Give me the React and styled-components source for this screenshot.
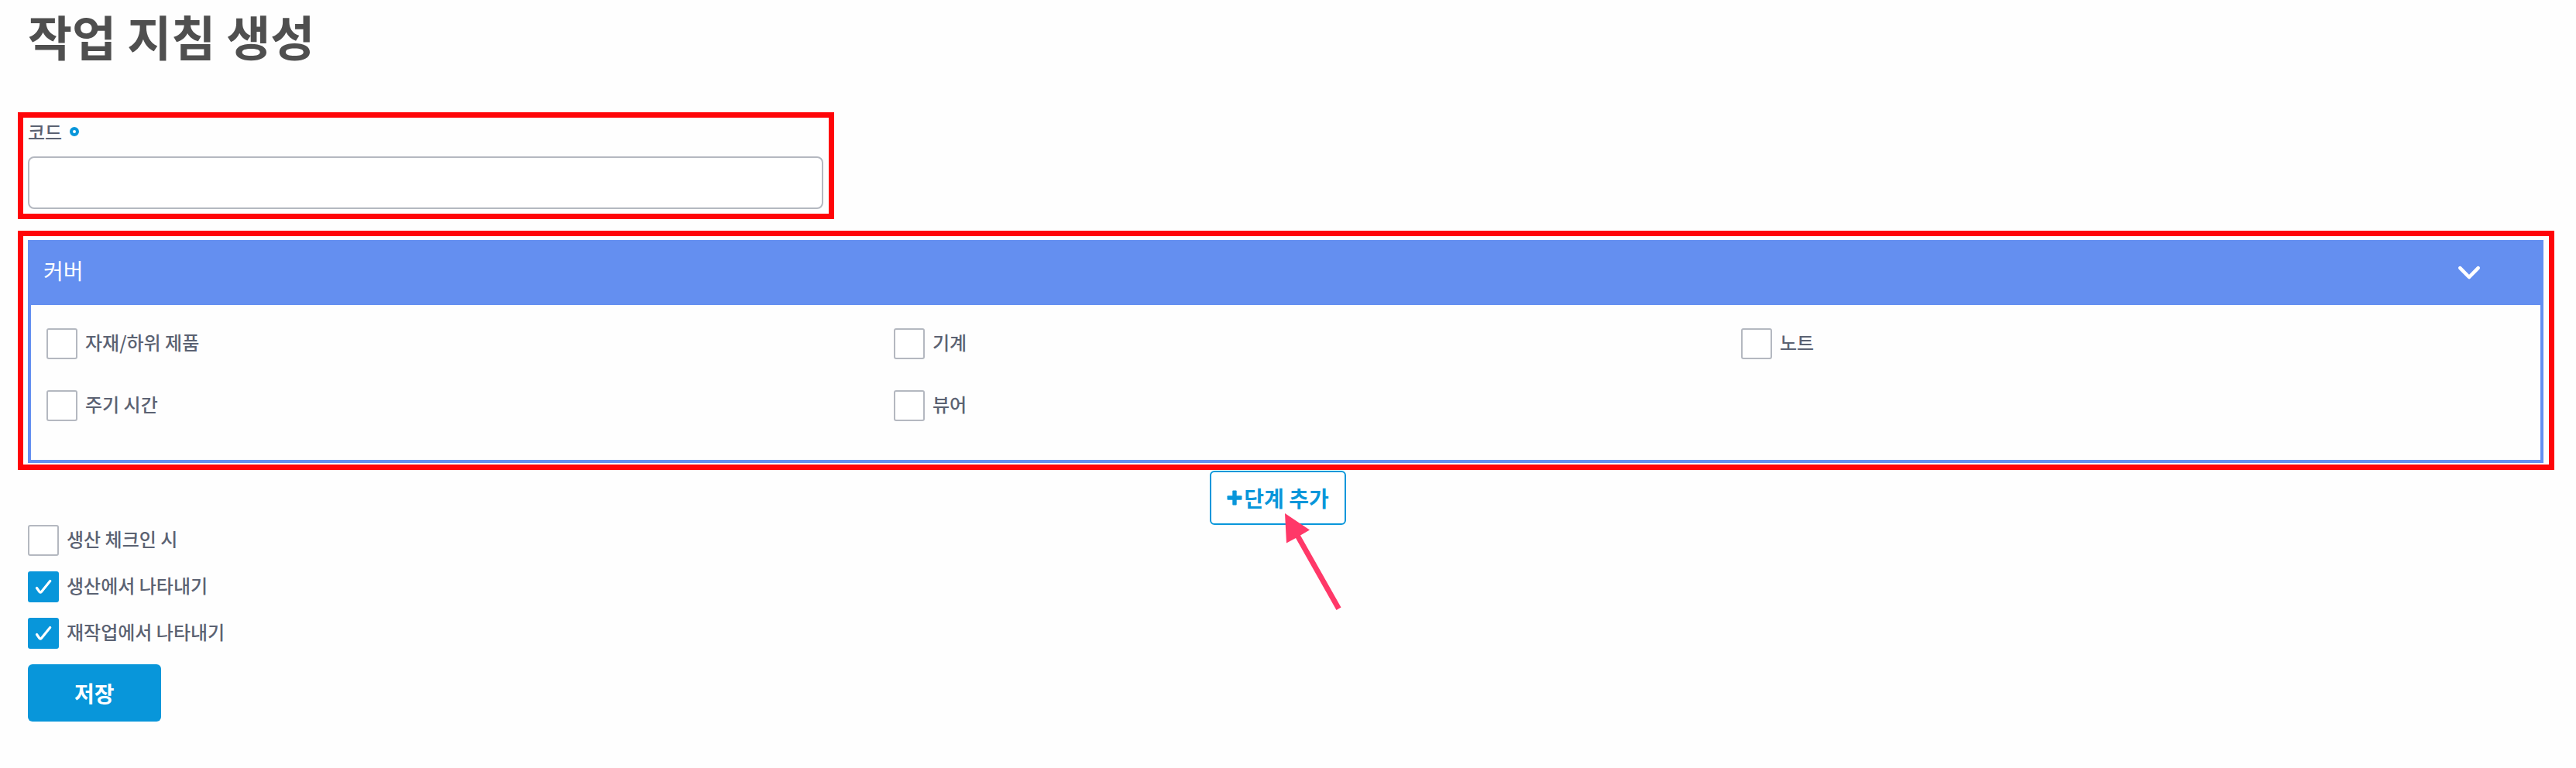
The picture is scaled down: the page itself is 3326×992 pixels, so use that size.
import React, { useState } from "react";
import styled, { createGlobalStyle } from "styled-components";

const GlobalStyle = createGlobalStyle`
  *, *::before, *::after { box-sizing: border-box; }
  body {
    margin: 0;
    background: #fefefe;
    color: #5b6272;
    font-family: "Noto Sans CJK KR", "Noto Sans", sans-serif;
    font-size: 24px;
    line-height: 36px;
    font-weight: 500;
  }
  button, input { font: inherit; }
`;

const Page = styled.main`
  padding: 6px 28px 60px 23px;
`;

const Title = styled.h1`
  margin: 0 0 59px;
  padding-left: 13px;
  color: #4f4f4f;
  font-size: 62px;
  line-height: 80px;
  font-weight: 700;
`;

const FieldGrid = styled.div`
  display: grid;
  grid-template-columns: repeat(3, 1fr);
  gap: 56px;
  margin-bottom: 15px;
`;

const Highlight = styled.div`
  border: 7px solid #ff0408;
  padding: ${(p) => p.$padding};
`;

const FieldLabel = styled.label`
  display: flex;
  align-items: center;
  gap: 10px;
  margin-bottom: 14px;
`;

const RequiredMark = styled.span`
  width: 12px;
  height: 12px;
  border: 4px solid #0896da;
  border-radius: 50%;
`;

const TextInput = styled.input`
  display: block;
  width: 100%;
  height: 68px;
  padding: 0 16px;
  border: 2px solid #b4b8c0;
  border-radius: 8px;
  background: #fff;
  color: inherit;
`;

const Panel = styled.section`
  border: 4px solid #648ff0;
`;

const PanelHeader = styled.button`
  display: flex;
  align-items: center;
  justify-content: space-between;
  width: 100%;
  height: 80px;
  padding: 0 72px 10px 16px;
  border: 0;
  background: #648ff0;
  color: #fff;
  font-size: 28px;
  font-weight: 400;
  cursor: pointer;
`;

const PanelBody = styled.div`
  display: grid;
  grid-template-columns: repeat(3, 1fr);
  gap: 40px 82px;
  padding: 30px 20px 50px;
`;

const CheckLabel = styled.label`
  display: flex;
  align-items: center;
  gap: 10px;
  height: 40px;
  cursor: pointer;
`;

const CheckText = styled.span`
  padding-bottom: 4px;
`;

const CheckBox = styled.span`
  display: grid;
  width: 40px;
  height: 40px;

  & > * { grid-area: 1 / 1; }
  & > svg { pointer-events: none; }
`;

const CheckInput = styled.input`
  appearance: none;
  width: 40px;
  height: 40px;
  margin: 0;
  border: 2px solid #b4b8c0;
  border-radius: 3px;
  background: #fff;

  &:checked {
    border-color: #0896da;
    background: #0896da;
  }
`;

const AddRow = styled.div`
  display: flex;
  justify-content: center;
  padding: 1px 21px 0 0;
`;

const AddAnchor = styled.div`
  position: relative;
`;

const AddButton = styled.button`
  display: flex;
  align-items: center;
  gap: 2px;
  height: 70px;
  padding: 0 20px;
  border: 2px solid #0896da;
  border-radius: 6px;
  background: #fff;
  color: #0896da;
  font-size: 28px;
  font-weight: 700;
  cursor: pointer;
`;

const Pointer = styled.svg`
  position: absolute;
  left: 96px;
  top: 54px;
  pointer-events: none;
`;

const Options = styled.div`
  display: flex;
  flex-direction: column;
  align-items: flex-start;
  gap: 20px;
  padding-left: 13px;
`;

const SaveButton = styled.button`
  height: 74px;
  padding: 0 60px;
  border: 0;
  border-radius: 6px;
  background: #0896da;
  color: #fff;
  font-size: 28px;
  font-weight: 700;
  cursor: pointer;
`;

function Check({ label, defaultChecked = false }) {
  const [checked, setChecked] = useState(defaultChecked);
  return (
    <CheckLabel>
      <CheckBox>
        <CheckInput
          type="checkbox"
          checked={checked}
          onChange={(e) => setChecked(e.target.checked)}
        />
        {checked && (
          <svg width="40" height="40" viewBox="0 0 40 40" fill="none" aria-hidden="true">
            <path
              d="M11.5 21.5 L15 26.5 Q16.2 27.8 17.4 26.5 L28.7 12.5"
              stroke="#fff"
              strokeWidth="3.2"
              strokeLinecap="round"
              strokeLinejoin="round"
            />
          </svg>
        )}
      </CheckBox>
      <CheckText>{label}</CheckText>
    </CheckLabel>
  );
}

const coverItems = ["자재/하위 제품", "기계", "노트", "주기 시간", "뷰어"];

export default function App() {
  const [open, setOpen] = useState(true);
  return (
    <>
      <GlobalStyle />
      <Page>
        <Title>작업 지침 생성</Title>

        <FieldGrid>
          <Highlight $padding="0 7px 6px 6px">
            <FieldLabel htmlFor="code">
              코드
              <RequiredMark />
            </FieldLabel>
            <TextInput id="code" type="text" required />
          </Highlight>
        </FieldGrid>

        <Highlight $padding="5px 7px 2px 6px">
          <Panel>
            <PanelHeader type="button" aria-expanded={open} onClick={() => setOpen(!open)}>
              커버
              <svg width="40" height="40" viewBox="0 0 40 40" fill="none" aria-hidden="true">
                <path
                  d="M8.3 17.2 L20 29 L31.7 17.2"
                  stroke="#fff"
                  strokeWidth="4.6"
                  strokeLinecap="round"
                  strokeLinejoin="round"
                />
              </svg>
            </PanelHeader>
            {open && (
              <PanelBody>
                {coverItems.map((item) => (
                  <Check key={item} label={item} />
                ))}
              </PanelBody>
            )}
          </Panel>
        </Highlight>

        <AddRow>
          <AddAnchor>
            <AddButton type="button">
              <svg width="20" height="20" viewBox="0 0 20 20" fill="#0896da" aria-hidden="true">
                <rect x="0.5" y="7.3" width="19" height="5.4" rx="1" />
                <rect x="7.3" y="0.5" width="5.4" height="19" rx="1" />
              </svg>
              단계 추가
            </AddButton>
            <Pointer width="76" height="130" viewBox="0 0 76 130" aria-hidden="true">
              <path
                d="M1 1 L33 22.5 L21 29.5 L73.5 122.5 L67.5 126 L15 33 L3 39.5 Z"
                fill="#ff3868"
              />
            </Pointer>
          </AddAnchor>
        </AddRow>

        <Options>
          <Check label="생산 체크인 시" />
          <Check label="생산에서 나타내기" defaultChecked />
          <Check label="재작업에서 나타내기" defaultChecked />
          <SaveButton type="button">저장</SaveButton>
        </Options>
      </Page>
    </>
  );
}
